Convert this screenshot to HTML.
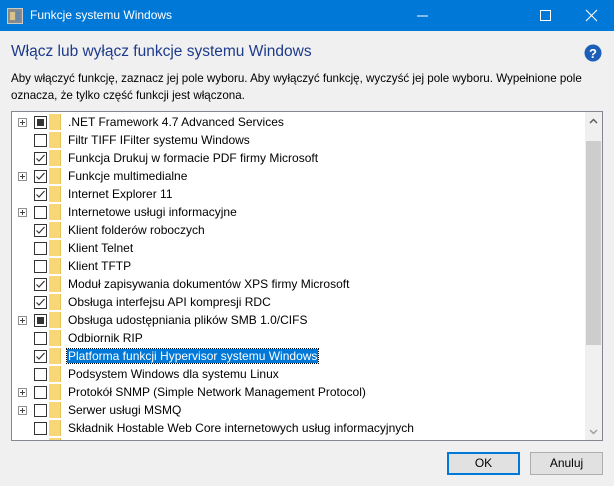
<!DOCTYPE html>
<html><head><meta charset="utf-8"><style>
*{box-sizing:border-box;margin:0;padding:0}
body{width:614px;height:486px;background:#f0f0f0;font-family:"Liberation Sans",sans-serif;font-size:12px;color:#000;position:relative;overflow:hidden}
.tb{position:absolute;left:0;top:0;width:614px;height:31px;background:#0078d7;color:#fff}
.tb .t{position:absolute;left:30px;top:8px;font-size:12px}
.h{position:absolute;left:11px;top:43px;font-size:15.5px;color:#1e3a8a}
.d{position:absolute;left:11px;top:70px;line-height:17px;font-size:11.6px;width:600px}
.lb{position:absolute;left:11px;top:111px;width:592px;height:330px;background:#fff;border:1px solid #828790;overflow:hidden}
.row{position:absolute;left:0;height:18px;width:574px}
.pl{position:absolute;left:6px;top:5px;width:9px;height:9px;border:1px solid #919191;}
.pl:before{content:"";position:absolute;left:1px;top:3px;width:5px;height:1px;background:#444}
.pl:after{content:"";position:absolute;left:3px;top:1px;width:1px;height:5px;background:#444}
.cb{position:absolute;left:22px;top:3px;width:13px;height:13px;border:1px solid #333;background:#fff}
.cb.f:after{content:"";position:absolute;left:2px;top:2px;width:7px;height:7px;background:#333}
.cb svg{position:absolute;left:0;top:0}
.fo{position:absolute;left:37px;top:1px;width:12px;height:16px;background:#f8d876;border-right:1px solid #e6c25a}
.tx{position:absolute;left:55px;top:2px;font-size:12px;white-space:nowrap;padding:0 1px;line-height:14px}
.sel{background:#0078d7;color:#fff;outline:1px dotted #000}
.sb{position:absolute;right:0;top:0;width:17px;height:328px;background:#f0f0f0}
.th{position:absolute;left:1px;top:29px;width:15px;height:204px;background:#cdcdcd}
.btn{position:absolute;top:452px;height:23px;border:1px solid #adadad;background:#e1e1e1;text-align:center;line-height:21px;font-size:12px}
</style></head><body>
<div class="tb">
<svg style="position:absolute;left:7px;top:8px" width="16" height="16"><rect x="0.5" y="0.5" width="15" height="15" fill="#8a8a8a" stroke="#ccc"/><rect x="3" y="4" width="5" height="8" fill="#d8c48a"/><rect x="9" y="3" width="4" height="10" fill="#6a88a8"/></svg>
<div class="t">Funkcje systemu Windows</div>
<svg style="position:absolute;left:0;top:0" width="614" height="31"><line x1="417" y1="16" x2="428" y2="16" stroke="#fff"/><rect x="540.5" y="10.5" width="10" height="10" fill="none" stroke="#fff"/><path d="M586 10L597 21M597 10L586 21" stroke="#fff" stroke-width="1.1"/></svg>
</div>
<div class="h">Włącz lub wyłącz funkcje systemu Windows</div>
<svg style="position:absolute;left:584px;top:44px" width="18" height="18"><circle cx="9" cy="9" r="8.5" fill="#1d5fb8"/><text x="9" y="14" font-size="13" font-weight="bold" fill="#fff" text-anchor="middle" font-family="Liberation Sans">?</text></svg>
<div class="d">Aby włączyć funkcję, zaznacz jej pole wyboru. Aby wyłączyć funkcję, wyczyść jej pole wyboru. Wypełnione pole oznacza, że tylko część funkcji jest włączona.</div>
<div class="lb">
<div class="row" style="top:1px"><div class="pl"></div><div class="cb f"></div><div class="fo"></div><div class="tx">.NET Framework 4.7 Advanced Services</div></div>
<div class="row" style="top:19px"><div class="cb"></div><div class="fo"></div><div class="tx">Filtr TIFF IFilter systemu Windows</div></div>
<div class="row" style="top:37px"><div class="cb"><svg width="11" height="11"><path d="M1.5 5.5L4 8L9.5 2" fill="none" stroke="#333" stroke-width="1.2"/></svg></div><div class="fo"></div><div class="tx">Funkcja Drukuj w formacie PDF firmy Microsoft</div></div>
<div class="row" style="top:55px"><div class="pl"></div><div class="cb"><svg width="11" height="11"><path d="M1.5 5.5L4 8L9.5 2" fill="none" stroke="#333" stroke-width="1.2"/></svg></div><div class="fo"></div><div class="tx">Funkcje multimedialne</div></div>
<div class="row" style="top:73px"><div class="cb"><svg width="11" height="11"><path d="M1.5 5.5L4 8L9.5 2" fill="none" stroke="#333" stroke-width="1.2"/></svg></div><div class="fo"></div><div class="tx">Internet Explorer 11</div></div>
<div class="row" style="top:91px"><div class="pl"></div><div class="cb"></div><div class="fo"></div><div class="tx">Internetowe usługi informacyjne</div></div>
<div class="row" style="top:109px"><div class="cb"><svg width="11" height="11"><path d="M1.5 5.5L4 8L9.5 2" fill="none" stroke="#333" stroke-width="1.2"/></svg></div><div class="fo"></div><div class="tx">Klient folderów roboczych</div></div>
<div class="row" style="top:127px"><div class="cb"></div><div class="fo"></div><div class="tx">Klient Telnet</div></div>
<div class="row" style="top:145px"><div class="cb"></div><div class="fo"></div><div class="tx">Klient TFTP</div></div>
<div class="row" style="top:163px"><div class="cb"><svg width="11" height="11"><path d="M1.5 5.5L4 8L9.5 2" fill="none" stroke="#333" stroke-width="1.2"/></svg></div><div class="fo"></div><div class="tx">Moduł zapisywania dokumentów XPS firmy Microsoft</div></div>
<div class="row" style="top:181px"><div class="cb"><svg width="11" height="11"><path d="M1.5 5.5L4 8L9.5 2" fill="none" stroke="#333" stroke-width="1.2"/></svg></div><div class="fo"></div><div class="tx">Obsługa interfejsu API kompresji RDC</div></div>
<div class="row" style="top:199px"><div class="pl"></div><div class="cb f"></div><div class="fo"></div><div class="tx">Obsługa udostępniania plików SMB 1.0/CIFS</div></div>
<div class="row" style="top:217px"><div class="cb"></div><div class="fo"></div><div class="tx">Odbiornik RIP</div></div>
<div class="row" style="top:235px"><div class="cb"><svg width="11" height="11"><path d="M1.5 5.5L4 8L9.5 2" fill="none" stroke="#333" stroke-width="1.2"/></svg></div><div class="fo"></div><div class="tx sel">Platforma funkcji Hypervisor systemu Windows</div></div>
<div class="row" style="top:253px"><div class="cb"></div><div class="fo"></div><div class="tx">Podsystem Windows dla systemu Linux</div></div>
<div class="row" style="top:271px"><div class="pl"></div><div class="cb"></div><div class="fo"></div><div class="tx">Protokół SNMP (Simple Network Management Protocol)</div></div>
<div class="row" style="top:289px"><div class="pl"></div><div class="cb"></div><div class="fo"></div><div class="tx">Serwer usługi MSMQ</div></div>
<div class="row" style="top:307px"><div class="cb"></div><div class="fo"></div><div class="tx">Składnik Hostable Web Core internetowych usług informacyjnych</div></div>
<div class="row" style="top:325px"><div class="cb"></div><div class="fo"></div><div class="tx">Składniki starszego typu</div></div>
<div class="sb"><svg width="17" height="328" style="position:absolute;left:0;top:0"><path d="M5 11L8.5 7.5L12 11" fill="none" stroke="#606060" stroke-width="1.5"/><path d="M5 318L8.5 321.5L12 318" fill="none" stroke="#a0a0a0" stroke-width="1.5"/></svg><div class="th"></div></div>
</div>
<div class="btn" style="left:447px;width:73px;border:2px solid #0078d7;line-height:19px">OK</div>
<div class="btn" style="left:530px;width:73px">Anuluj</div>
</body></html>
